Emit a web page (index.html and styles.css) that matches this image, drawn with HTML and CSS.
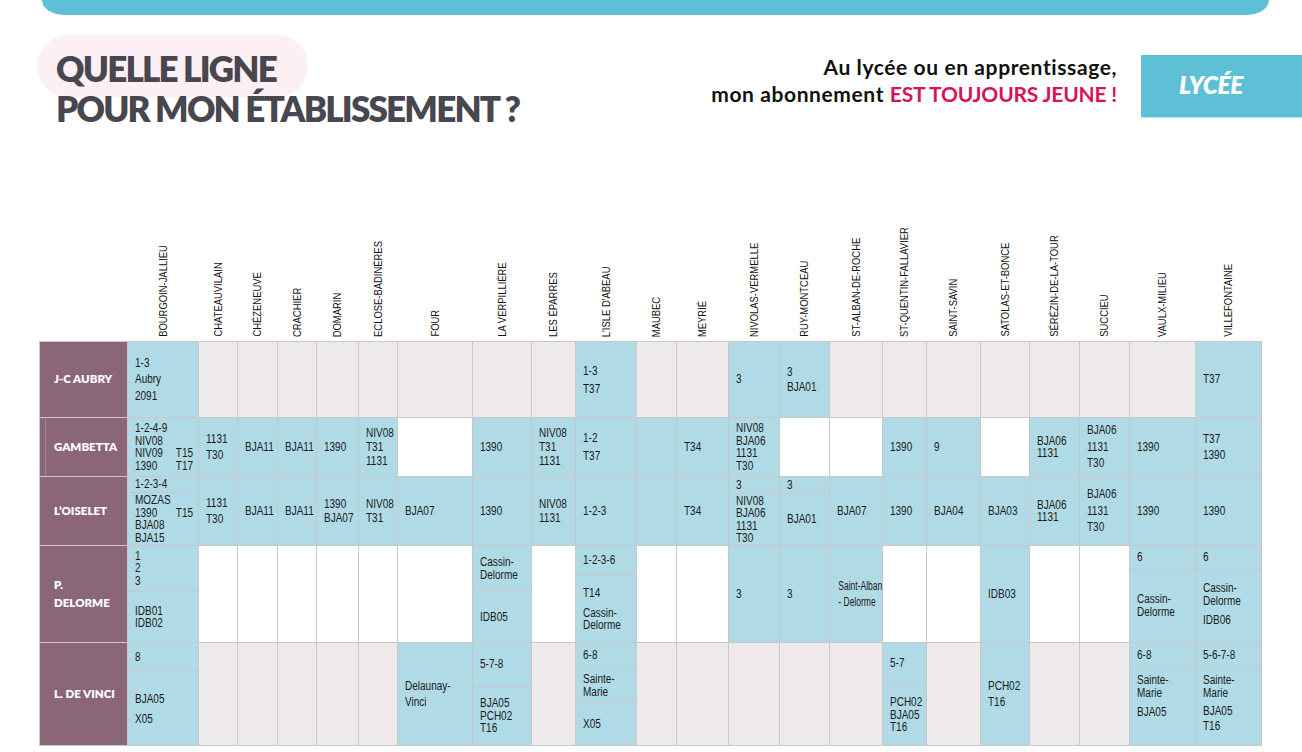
FILE: index.html
```html
<!DOCTYPE html>
<html lang="fr">
<head>
<meta charset="utf-8">
<title>Quelle ligne pour mon établissement ?</title>
<link rel="stylesheet" href="styles.css">
</head>
<body>
<div class="topbar"></div>
<header class="head">
  <div class="pill"></div>
  <h1 class="title">QUELLE LIGNE<br>POUR MON ÉTABLISSEMENT ?</h1>
  <p class="slogan">Au lycée ou en apprentissage,<br>mon abonnement <em>EST TOUJOURS JEUNE !</em></p>
  <div class="badge">LYCÉE</div>
</header>

<div class="cols">
  <div><span><span>BOURGOIN-JALLIEU</span></span></div>
  <div><span><span>CHATEAUVILAIN</span></span></div>
  <div><span><span>CHÉZENEUVE</span></span></div>
  <div><span><span>CRACHIER</span></span></div>
  <div><span><span>DOMARIN</span></span></div>
  <div><span><span>ECLOSE-BADINÈRES</span></span></div>
  <div><span><span>FOUR</span></span></div>
  <div><span><span>LA VERPILLIÈRE</span></span></div>
  <div><span><span>LES ÉPARRES</span></span></div>
  <div><span><span>L'ISLE D'ABEAU</span></span></div>
  <div><span><span>MAUBEC</span></span></div>
  <div><span><span>MEYRIÉ</span></span></div>
  <div><span><span>NIVOLAS-VERMELLE</span></span></div>
  <div><span><span>RUY-MONTCEAU</span></span></div>
  <div><span><span>ST-ALBAN-DE-ROCHE</span></span></div>
  <div><span><span>ST-QUENTIN-FALLAVIER</span></span></div>
  <div><span><span>SAINT-SAVIN</span></span></div>
  <div><span><span>SATOLAS-ET-BONCE</span></span></div>
  <div><span><span>SÉRÉZIN-DE-LA-TOUR</span></span></div>
  <div><span><span>SUCCIEU</span></span></div>
  <div><span><span>VAULX-MILIEU</span></span></div>
  <div><span><span>VILLEFONTAINE</span></span></div>
</div>

<div class="grid">
  <!-- J-C AUBRY -->
  <div class="l">J-C AUBRY</div>
  <div class="b"><p>1-3<br>Aubry<br>2091</p></div>
  <div class="g"></div><div class="g"></div><div class="g"></div><div class="g"></div><div class="g"></div><div class="g"></div>
  <div class="g"></div><div class="g"></div>
  <div class="b lh18"><p>1-3<br>T37</p></div>
  <div class="g"></div><div class="g"></div>
  <div class="b"><p>3</p></div>
  <div class="b lh15"><p>3<br>BJA01</p></div>
  <div class="g"></div><div class="g"></div><div class="g"></div><div class="g"></div><div class="g"></div><div class="g"></div><div class="g"></div>
  <div class="b"><p>T37</p></div>

  <!-- GAMBETTA -->
  <div class="l gam">GAMBETTA</div>
  <div class="b t"><p>1-2-4-9<br>NIV08<br><span class="c1">NIV09</span>T15<br><span class="c1">1390</span>T17</p></div>
  <div class="b"><p>1131<br>T30</p></div>
  <div class="b"><p>BJA11</p></div>
  <div class="b"><p>BJA11</p></div>
  <div class="b"><p>1390</p></div>
  <div class="b m"><p>NIV08<br>T31<br>1131</p></div>
  <div class="w"></div>
  <div class="b"><p>1390</p></div>
  <div class="b m"><p>NIV08<br>T31<br>1131</p></div>
  <div class="b lh18"><p>1-2<br>T37</p></div>
  <div class="b"></div>
  <div class="b"><p>T34</p></div>
  <div class="b t"><p>NIV08<br>BJA06<br>1131<br>T30</p></div>
  <div class="w"></div>
  <div class="w"></div>
  <div class="b"><p>1390</p></div>
  <div class="b"><p>9</p></div>
  <div class="w"></div>
  <div class="b t"><p>BJA06<br>1131</p></div>
  <div class="b"><p>BJA06<br>1131<br>T30</p></div>
  <div class="b"><p>1390</p></div>
  <div class="b"><p>T37<br>1390</p></div>

  <!-- L'OISELET -->
  <div class="l">L’OISELET</div>
  <div class="b sp"><div class="h15"><p>1-2-3-4</p></div><div class="t"><p>MOZAS<br><span class="c1">1390</span>T15<br>BJA08<br>BJA15</p></div></div>
  <div class="b"><p>1131<br>T30</p></div>
  <div class="b"><p>BJA11</p></div>
  <div class="b"><p>BJA11</p></div>
  <div class="b m"><p>1390<br>BJA07</p></div>
  <div class="b m"><p>NIV08<br>T31</p></div>
  <div class="b"><p>BJA07</p></div>
  <div class="b"><p>1390</p></div>
  <div class="b m"><p>NIV08<br>1131</p></div>
  <div class="b"><p>1-2-3</p></div>
  <div class="b"></div>
  <div class="b"><p>T34</p></div>
  <div class="b sp"><div class="h16"><p>3</p></div><div class="t"><p>NIV08<br>BJA06<br>1131<br>T30</p></div></div>
  <div class="b sp"><div class="h16"><p>3</p></div><div><p>BJA01</p></div></div>
  <div class="b"><p>BJA07</p></div>
  <div class="b"><p>1390</p></div>
  <div class="b"><p>BJA04</p></div>
  <div class="b"><p>BJA03</p></div>
  <div class="b t"><p>BJA06<br>1131</p></div>
  <div class="b"><p>BJA06<br>1131<br>T30</p></div>
  <div class="b"><p>1390</p></div>
  <div class="b"><p>1390</p></div>

  <!-- P. DELORME -->
  <div class="l lh18">P.<br>DELORME</div>
  <div class="b sp"><div class="h45 t"><p>1<br>2<br>3</p></div><div class="t"><p>IDB01<br>IDB02</p></div></div>
  <div class="w"></div><div class="w"></div><div class="w"></div><div class="w"></div><div class="w"></div><div class="w"></div>
  <div class="b sp"><div class="h45 t"><p>Cassin-<br>Delorme</p></div><div><p>IDB05</p></div></div>
  <div class="w"></div>
  <div class="b sp"><div class="h28"><p>1-2-3-6</p></div><div><p><span class="gapb">T14</span><span class="t blk">Cassin-<br>Delorme</span></p></div></div>
  <div class="w"></div><div class="w"></div>
  <div class="b"><p>3</p></div>
  <div class="b"><p>3</p></div>
  <div class="b ctr"><p>Saint-Alban<br>- Delorme</p></div>
  <div class="w"></div><div class="w"></div>
  <div class="b"><p>IDB03</p></div>
  <div class="w"></div><div class="w"></div>
  <div class="b sp"><div class="h22"><p>6</p></div><div class="t"><p>Cassin-<br>Delorme</p></div></div>
  <div class="b sp"><div class="h22"><p>6</p></div><div><p><span class="t gapb">Cassin-<br>Delorme</span>IDB06</p></div></div>

  <!-- L. DE VINCI -->
  <div class="l">L. DE VINCI</div>
  <div class="b sp"><div class="h28"><p>8</p></div><div class="lh20"><p>BJA05<br>X05</p></div></div>
  <div class="g"></div><div class="g"></div><div class="g"></div><div class="g"></div><div class="g"></div>
  <div class="b"><p>Delaunay-<br>Vinci</p></div>
  <div class="b sp"><div class="h43"><p>5-7-8</p></div><div class="t"><p>BJA05<br>PCH02<br>T16</p></div></div>
  <div class="g"></div>
  <div class="b sp"><div class="h24"><p>6-8</p></div><div class="h35 t"><p>Sainte-<br>Marie</p></div><div><p>X05</p></div></div>
  <div class="g"></div><div class="g"></div><div class="g"></div><div class="g"></div><div class="g"></div>
  <div class="b sp"><div class="h41"><p>5-7</p></div><div class="t"><p>PCH02<br>BJA05<br>T16</p></div></div>
  <div class="g"></div>
  <div class="b"><p>PCH02<br>T16</p></div>
  <div class="g"></div><div class="g"></div>
  <div class="b sp"><div class="h24"><p>6-8</p></div><div class="top"><p><span class="t gapb">Sainte-<br>Marie</span>BJA05</p></div></div>
  <div class="b sp"><div class="h24"><p>5-6-7-8</p></div><div class="top"><p><span class="t gapb">Sainte-<br>Marie</span><span class="lh15 blk">BJA05<br>T16</span></p></div></div>
</div>
</body>
</html>
```

FILE: styles.css
```css
* { box-sizing: border-box; margin: 0; padding: 0; }

body {
  width: 1302px;
  height: 752px;
  overflow: hidden;
  background: #ffffff;
  font-family: "Liberation Sans", Arial, sans-serif;
  color: #1a1a1a;
}

.topbar {
  margin-left: 42px;
  width: 1227px;
  height: 15px;
  background: #5dc0d6;
  border-radius: 0 0 22px 22px / 0 0 15px 15px;
}

.head {
  position: relative;
  display: flex;
  align-items: flex-start;
  height: 102px;
}

.pill {
  position: absolute;
  left: 37px;
  top: 20px;
  width: 271px;
  height: 62px;
  border-radius: 31px;
  background: #fcf0f5;
}

.title {
  position: relative;
  margin-left: 56px;
  margin-top: 33px;
  font-family: "Lato", "Liberation Sans", sans-serif;
  font-weight: 800;
  font-size: 35px;
  line-height: 40px;
  letter-spacing: -1.8px;
  color: #48464f;
}

.slogan {
  margin-left: auto;
  margin-right: 24px;
  margin-top: 38px;
  text-align: right;
  font-family: "Lato", "Liberation Sans", sans-serif;
  font-weight: 700;
  font-size: 21px;
  line-height: 27px;
  letter-spacing: 0.6px;
  color: #111111;
}

.slogan em {
  font-style: normal;
  letter-spacing: -0.2px;
  color: #d5145b;
}

.badge {
  width: 161px;
  height: 62px;
  margin-top: 40px;
  display: flex;
  align-items: center;
  padding-left: 38px;
  padding-bottom: 4px;
  background: #5dc0d6;
  box-shadow: 0 1px 0 #bfe6ee;
  color: #ffffff;
  font-family: "Lato", "Liberation Sans", sans-serif;
  font-weight: 800;
  font-style: italic;
  font-size: 24.5px;
  letter-spacing: -0.3px;
}

.cols,
.grid {
  display: grid;
  grid-template-columns: 87px 70px 38px 39px 38px 41px 38px 74px 58px 43px 60px 39px 51px 50px 49px 52px 43px 53px 48px 49px 49px 65px 65px;
  column-gap: 1px;
  margin-left: 39px;
  width: 1223px;
}

.cols {
  margin-top: 103px;
  height: 121px;
  grid-template-rows: 121px;
  padding: 0 1px;
}

.cols > div {
  min-height: 0;
  display: flex;
  align-items: flex-end;
  justify-content: center;
  padding-bottom: 4px;
}

.cols > div:first-child { grid-column: 2; }

.cols > div > span {
  flex: none;
  writing-mode: vertical-rl;
  transform: rotate(180deg);
  font-size: 11.5px;
  line-height: 11px;
  white-space: nowrap;
  color: #111111;
}

.cols > div > span > span {
  display: inline-block;
  transform: scaleY(0.82);
  transform-origin: 50% 0;
}

.grid {
  grid-template-rows: 75px 58px 68px 96px 102px;
  row-gap: 1px;
  padding: 1px;
  background: #c8c8c8;
}

.grid > div,
.sp > div {
  display: flex;
  flex-direction: column;
  justify-content: center;
  padding-left: 7px;
  font-size: 12.5px;
  line-height: 16.5px;
}

.grid p {
  white-space: nowrap;
  transform: scaleX(0.8);
  transform-origin: 0 50%;
}

.b, .sp > div { background: #b0dbe6; }
.g { background: #eeeaeb; }
.w { background: #ffffff; }

.grid > .l {
  background: #8b6679;
  color: #ffffff;
  font-family: "Lato", "Liberation Sans", sans-serif;
  font-weight: 800;
  font-size: 11.5px;
  padding-left: 14px;
}

.grid > .gam {
  background: linear-gradient(to right, #8b6679 5px, #a38797 5px, #a38797 6px, #8b6679 6px);
}

.grid > .sp {
  padding: 0;
  gap: 1px;
  background: #c8c8c8;
  justify-content: stretch;
}

.sp > div { flex: 1; }
.sp > div.h15 { flex: none; height: 15px; }
.sp > div.h16 { flex: none; height: 16px; }
.sp > div.h22 { flex: none; height: 22px; }
.sp > div.h24 { flex: none; height: 24px; }
.sp > div.h28 { flex: none; height: 28px; }
.sp > div.h35 { flex: none; height: 35px; }
.sp > div.h41 { flex: none; height: 41px; }
.sp > div.h43 { flex: none; height: 43px; }
.sp > div.h45 { flex: none; height: 45px; }

.grid .t { line-height: 12.5px; }
.grid .m { line-height: 14px; }
.grid .lh15 { line-height: 15px; }
.grid .lh18 { line-height: 18px; }
.grid .lh20 { line-height: 20px; }

.c1 { display: inline-block; width: 51px; }
.blk { display: block; }
.gapb { display: block; margin-bottom: 5px; }

.sp > div.top {
  justify-content: flex-start;
  padding-top: 6px;
}

.grid > .ctr {
  padding-left: 0;
  text-align: center;
  line-height: 16px;
}

.grid > .ctr p {
  transform: scaleX(0.68);
  transform-origin: 50% 50%;
}
```
